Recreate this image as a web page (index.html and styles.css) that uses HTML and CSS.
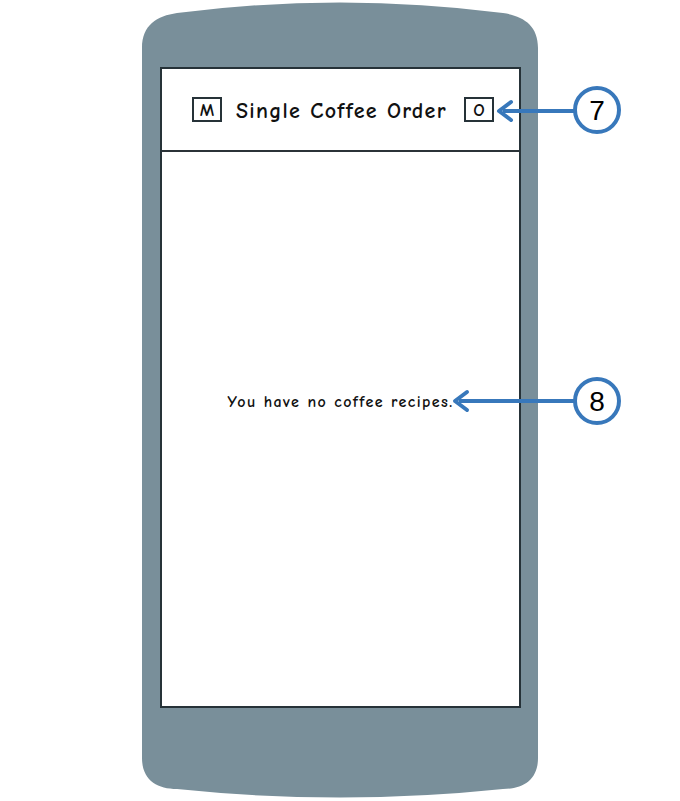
FILE: index.html
```html
<!DOCTYPE html>
<html>
<head>
<meta charset="utf-8">
<link rel="stylesheet" href="styles.css">
</head>
<body>
<div class="stage">
  <div class="phone">
    <svg class="phone-body" width="396" height="800" viewBox="0 0 396 800">
      <path d="M0,48 C0,25 15,16 35,13 Q198,-8 361,13 C381,16 396,25 396,48 L396,758 C396,780 381,789 361,789 Q198,806 35,789 C15,789 0,780 0,758 Z" fill="#798f9a"/>
    </svg>
    <div class="screen">
      <div class="header">
        <div class="icon-box">M</div>
        <div class="title">Single Coffee Order</div>
        <div class="icon-box">O</div>
      </div>
      <div class="content">
        <p class="empty">You have no coffee recipes.</p>
      </div>
    </div>
  </div>
  <svg class="callouts" width="680" height="801" viewBox="0 0 680 801">
    <g stroke="#3878bb" fill="none" stroke-width="4">
      <line x1="574" y1="111" x2="503" y2="111"/>
      <path d="M511,102 L499,111 L511,120" stroke-linejoin="round" stroke-linecap="round"/>
      <circle cx="597" cy="110" r="22" fill="#fff"/>
      <line x1="575" y1="401" x2="459" y2="401"/>
      <path d="M467,392 L455,401 L467,410" stroke-linejoin="round" stroke-linecap="round"/>
      <circle cx="597" cy="401" r="22" fill="#fff"/>
    </g>
    <text x="597" y="120" class="num">7</text>
    <text x="597" y="411" class="num">8</text>
  </svg>
</div>
</body>
</html>
```
FILE: styles.css
```css
html, body {
  margin: 0;
  padding: 0;
  background: #fff;
}
.stage {
  position: relative;
  width: 680px;
  height: 801px;
  overflow: hidden;
  font-family: "Comic Sans MS", "Comic Neue", "DejaVu Sans", sans-serif;
  color: #111;
}
.phone {
  position: relative;
  margin-left: 142px;
  width: 396px;
  height: 800px;
  padding: 67px 0 0 18px;
  box-sizing: border-box;
}
.phone-body {
  position: absolute;
  left: 0;
  top: 0;
  z-index: 0;
}
.screen {
  position: relative;
  z-index: 1;
  width: 361px;
  height: 641px;
  box-sizing: border-box;
  background: #fff;
  border: 2px solid #263238;
  display: flex;
  flex-direction: column;
}
.header {
  height: 83px;
  box-sizing: border-box;
  border-bottom: 2px solid #2b3338;
  display: flex;
  align-items: center;
  padding: 0 0 0 30px;
}
.icon-box {
  width: 30px;
  height: 25px;
  box-sizing: border-box;
  border: 2px solid #263238;
  display: flex;
  align-items: center;
  justify-content: center;
  font-size: 18px;
  font-weight: 700;
  line-height: 1;
  padding-top: 2px;
}
.title {
  font-size: 22px;
  font-weight: 700;
  margin: 3px auto 0 14px;
  width: 212px;
  white-space: nowrap;
  letter-spacing: 1.3px;
}
.header .icon-box:last-child {
  margin-right: 25px;
}
.content {
  flex: 1;
  display: flex;
  justify-content: center;
}
.empty {
  margin: 240px 0 0 0;
  font-size: 16px;
  font-weight: 700;
  line-height: 20px;
  white-space: nowrap;
  letter-spacing: 1.4px;
}
.callouts {
  position: absolute;
  left: 0;
  top: 0;
  z-index: 2;
}
.num {
  font-family: "Liberation Sans", Arial, sans-serif;
  font-size: 28px;
  text-anchor: middle;
  fill: #000;
}
```
